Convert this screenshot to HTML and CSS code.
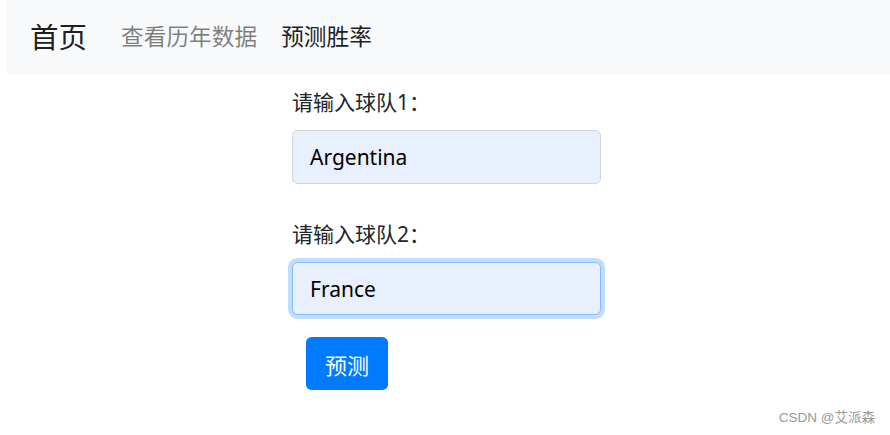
FILE: index.html
```html
<!DOCTYPE html>
<html lang="zh">
<head>
<meta charset="utf-8">
<title>预测胜率</title>
<link rel="stylesheet" href="styles.css">
</head>
<body>
<nav class="navbar">
  <a class="brand" href="#">首页</a>
  <a class="nav-link muted" href="#">查看历年数据</a>
  <a class="nav-link active" href="#">预测胜率</a>
</nav>
<main class="main">
  <form class="form">
    <div class="group">
      <label class="label">请输入球队1：</label>
      <div class="input">Argentina</div>
    </div>
    <div class="group">
      <label class="label">请输入球队2：</label>
      <div class="input focus">France</div>
    </div>
    <button type="button" class="btn">预测</button>
  </form>
</main>
<div class="watermark">CSDN @艾派森</div>
</body>
</html>
```
FILE: styles.css
```css
html, body {
  margin: 0;
  padding: 0;
  background: #fff;
  width: 890px;
  height: 435px;
  overflow: hidden;
  font-family: "Noto Sans", "Noto Sans CJK SC", sans-serif;
  color: #212529;
}
body { position: relative; }
.navbar {
  margin-left: 7px;
  height: 75px;
  background: #f8f9fa;
  display: flex;
  align-items: center;
  padding: 0 22px 0 23px;
  box-sizing: border-box;
}
.navbar a { text-decoration: none; }
.brand {
  font-size: 28.5px;
  color: rgba(0,0,0,.9);
  margin-right: 34px;
  line-height: 1;
}
.nav-link {
  font-size: 22.7px;
  line-height: 1;
  margin-right: 24px;
}
.muted { color: rgba(0,0,0,.5); }
.active { color: rgba(0,0,0,.9); }
.main {
  padding-left: 292px;
  padding-top: 10px;
}
.form {
  width: 309px;
  display: flex;
  flex-direction: column;
}
.group {
  display: flex;
  flex-direction: column;
  margin-bottom: 33px;
}
.group + .group { margin-bottom: 22px; }
.label {
  font-size: 21px;
  line-height: 34px;
  margin-bottom: 11px;
  color: #212529;
}
.input {
  height: 54px;
  box-sizing: border-box;
  border: 1px solid #ced4da;
  border-radius: 5.6px;
  background: #e8f0fe;
  font-size: 21px;
  color: #000;
  padding: 0 17px;
  display: flex;
  align-items: center;
}
.input.focus {
  height: 53px;
  border-color: #80bdff;
  box-shadow: 0 0 0 4px rgba(0,123,255,.25);
}
.btn {
  align-self: flex-start;
  margin-left: 14px;
  height: 53px;
  width: 82px;
  border: none;
  border-radius: 5.6px;
  background: #007bff;
  color: #fff;
  font-family: "Noto Sans CJK SC", sans-serif;
  font-size: 22px;
  padding: 0;
}
.watermark {
  position: absolute;
  right: 15px;
  bottom: 9px;
  font-size: 13.5px;
  color: #999;
  font-family: "Liberation Sans", "Noto Sans CJK SC", sans-serif;
}
```
